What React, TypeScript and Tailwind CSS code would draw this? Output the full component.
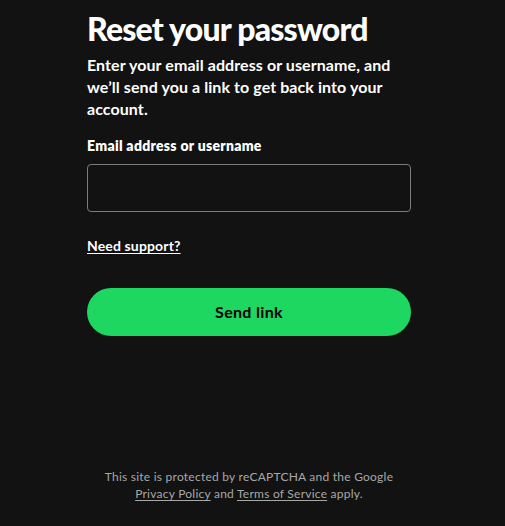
import React, { useState } from 'react';

const App: React.FC = () => {
  const [value, setValue] = useState('');

  return (
    <div className="min-h-[526px] bg-[#121212] text-white font-['Lato',sans-serif]">
      <div className="ml-[87px] w-[324px] flex flex-col">
        <h1 className="pt-[9px] text-[32px] leading-[40px] font-black tracking-[-0.025em]">Reset your password</h1>
        <p className="mt-[5px] text-[16px] leading-[22px] font-bold tracking-[0.005em]">
          Enter your email address or username, and we’ll send you a link to get back into your account.
        </p>

        <label htmlFor="email" className="mt-[16px] text-[14px] leading-[20px] font-extrabold tracking-[0.02em]">
          Email address or username
        </label>
        <input
          id="email"
          value={value}
          onChange={(e) => setValue(e.target.value)}
          className="mt-[8px] h-[48px] w-full rounded-[4px] border border-[#7c7c7c] bg-transparent px-3 text-white outline-none"
        />

        <a href="#" className="mt-[24px] self-start text-[14px] leading-[20px] font-bold tracking-[0.01em] underline underline-offset-2">
          Need support?
        </a>

        <button className="mt-[32px] h-[48px] w-full rounded-full bg-[#1ed760] text-[16px] font-bold tracking-[0.02em] text-black">
          Send link
        </button>

        <p className="mt-[132px] text-center text-[12px] leading-[17px] tracking-[0.02em] text-[#a7a7a7]">
          This site is protected by reCAPTCHA and the Google
          <br />
          <a href="#" className="underline underline-offset-2">Privacy Policy</a> and{' '}
          <a href="#" className="underline underline-offset-2">Terms of Service</a> apply.
        </p>
      </div>
    </div>
  );
};

export default App;
